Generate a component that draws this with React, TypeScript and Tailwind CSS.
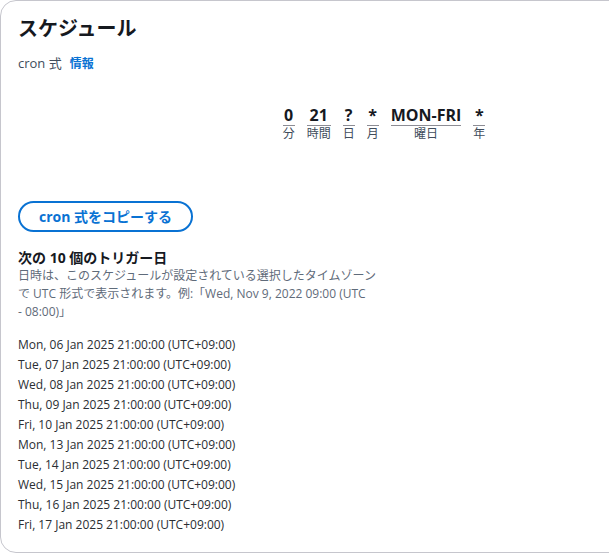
const fields = [
  { value: "0", label: "分" },
  { value: "21", label: "時間" },
  { value: "?", label: "日" },
  { value: "*", label: "月" },
  { value: "MON-FRI", label: "曜日" },
  { value: "*", label: "年" },
];

const dates = [
  "Mon, 06 Jan 2025 21:00:00 (UTC+09:00)",
  "Tue, 07 Jan 2025 21:00:00 (UTC+09:00)",
  "Wed, 08 Jan 2025 21:00:00 (UTC+09:00)",
  "Thu, 09 Jan 2025 21:00:00 (UTC+09:00)",
  "Fri, 10 Jan 2025 21:00:00 (UTC+09:00)",
  "Mon, 13 Jan 2025 21:00:00 (UTC+09:00)",
  "Tue, 14 Jan 2025 21:00:00 (UTC+09:00)",
  "Wed, 15 Jan 2025 21:00:00 (UTC+09:00)",
  "Thu, 16 Jan 2025 21:00:00 (UTC+09:00)",
  "Fri, 17 Jan 2025 21:00:00 (UTC+09:00)",
];

export default function App() {
  return (
    <div
      className="w-[609px] h-[553px] overflow-hidden bg-white"
      style={{ fontFamily: '"Open Sans", "Noto Sans CJK JP", sans-serif' }}
    >
      <div className="w-[768px] h-[553px] border border-[#c6c6cd] rounded-2xl px-[17px] pt-[14px] text-[#16191f]">
        <h2 className="text-[20px] font-bold leading-[28px]">スケジュール</h2>

        <div className="mt-[10px] flex items-baseline gap-2 text-[13px] leading-[20px] text-[#414d5c]">
          <span>cron 式</span>
          <span className="text-[12px] font-bold text-[#0972d3]">情報</span>
        </div>

        <div className="mt-[31px] flex justify-center gap-3">
          {fields.map((f, i) => (
            <div key={i} className="flex flex-col items-stretch text-center">
              <span className="text-[16px] font-bold leading-[20px]">{f.value}</span>
              <span className="border-t border-[#8c8c94] text-[12px] leading-[16px] text-[#414d5c]">
                {f.label}
              </span>
            </div>
          ))}
        </div>

        <button className="mt-[59px] h-[31px] px-[19px] rounded-full border-2 border-[#0972d3] text-[#0972d3] text-[14px] font-bold">
          cron 式をコピーする
        </button>

        <div className="mt-[16px] text-[14px] font-bold leading-[20px]">次の 10 個のトリガー日</div>
        <p className="-mt-[1px] w-[362px] text-[12px] leading-[18px] text-[#5f6b7a]">
          日時は、このスケジュールが設定されている選択したタイムゾーンで UTC 形式で表示されます。例:「Wed, Nov 9, 2022 09:00 (UTC{" "}
          <span className="whitespace-nowrap">- 08:00)」</span>
        </p>

        <ul className="mt-[14px] flex flex-col">
          {dates.map((d) => (
            <li key={d} className="text-[12px] leading-[20px] text-[#2a2e33]">
              {d}
            </li>
          ))}
        </ul>
      </div>
    </div>
  );
}
